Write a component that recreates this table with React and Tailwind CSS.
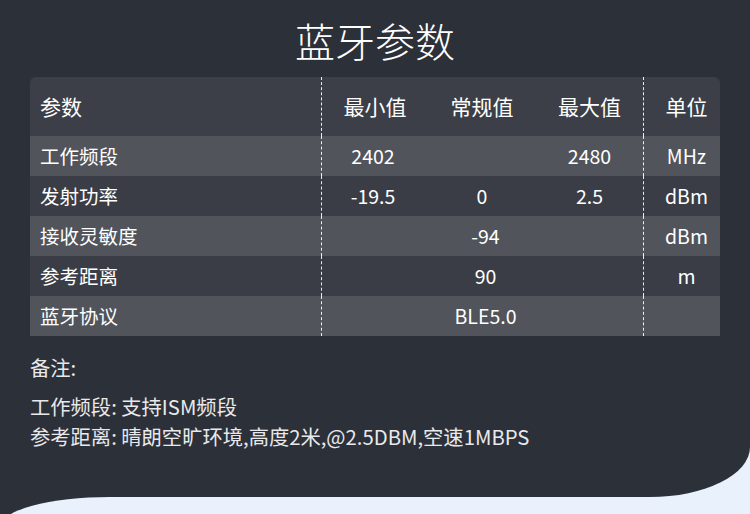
export default function App() {
  const rows = [
    { name: '工作频段', min: '2402', typ: '', max: '2480', unit: 'MHz' },
    { name: '发射功率', min: '-19.5', typ: '0', max: '2.5', unit: 'dBm' },
    { name: '接收灵敏度', span: '-94', unit: 'dBm' },
    { name: '参考距离', span: '90', unit: 'm' },
    { name: '蓝牙协议', span: 'BLE5.0', unit: '' },
  ];

  const font = { fontFamily: '"Noto Sans CJK SC", "Noto Sans", sans-serif' };

  return (
    <div
      className="w-[750px] h-[514px] bg-[#e9f1fd] flex flex-col overflow-hidden"
      style={font}
    >
      <div className="h-[497px] bg-[#2c3039] rounded-br-[100px_50px] pt-[16px] px-[30px] text-white">
        {/* Title */}
        <h1 className="text-center text-[40px] leading-[48px] font-light">
          蓝牙参数
        </h1>

        {/* Table */}
        <div className="mt-[13px] w-[690px] rounded-t-[6px] overflow-hidden">
          <div className="grid grid-cols-[291px_107px_108px_107px_77px] h-[59px] bg-[#3c3f47] text-[21px] items-center">
            <div className="pl-[10px]">参数</div>
            <div className="h-full flex items-center justify-center border-l border-dashed border-white/90">最小值</div>
            <div className="text-center">常规值</div>
            <div className="text-center">最大值</div>
            <div className="h-full flex items-center justify-center pl-[9px] border-l border-dashed border-white/90">单位</div>
          </div>

          {rows.map((r, i) => (
            <div
              key={r.name}
              className={
                'grid grid-cols-[291px_107px_108px_107px_77px] h-[40px] text-[19.5px] items-center ' +
                (i % 2 === 0 ? 'bg-[#51545b]' : 'bg-[#3a3d45]')
              }
            >
              <div className="pl-[10px]">{r.name}</div>
              {r.span ? (
                <div className="col-span-3 h-full flex items-center justify-center pl-[6px] border-l border-dashed border-white/90">
                  {r.span}
                </div>
              ) : (
                <>
                  <div className="h-full flex items-center justify-center pr-[4px] border-l border-dashed border-white/90">
                    {r.min}
                  </div>
                  <div className="text-center">{r.typ}</div>
                  <div className="text-center">{r.max}</div>
                </>
              )}
              <div className="h-full flex items-center justify-center pl-[9px] border-l border-dashed border-white/90">
                {r.unit}
              </div>
            </div>
          ))}
        </div>

        {/* Notes */}
        <div className="mt-[16px] text-[20.3px] leading-[30px] text-[#e8e9eb]">
          <p>备注:</p>
          <p className="mt-[9px]">工作频段: 支持ISM频段</p>
          <p>参考距离: 晴朗空旷环境,高度2米,@2.5DBM,空速1MBPS</p>
        </div>
      </div>

      <div className="h-[17px] bg-[#2c3039] overflow-hidden">
        <div className="h-[40px] bg-[#e9f1fd] rounded-tl-[110px_30px]" />
      </div>
    </div>
  );
}
